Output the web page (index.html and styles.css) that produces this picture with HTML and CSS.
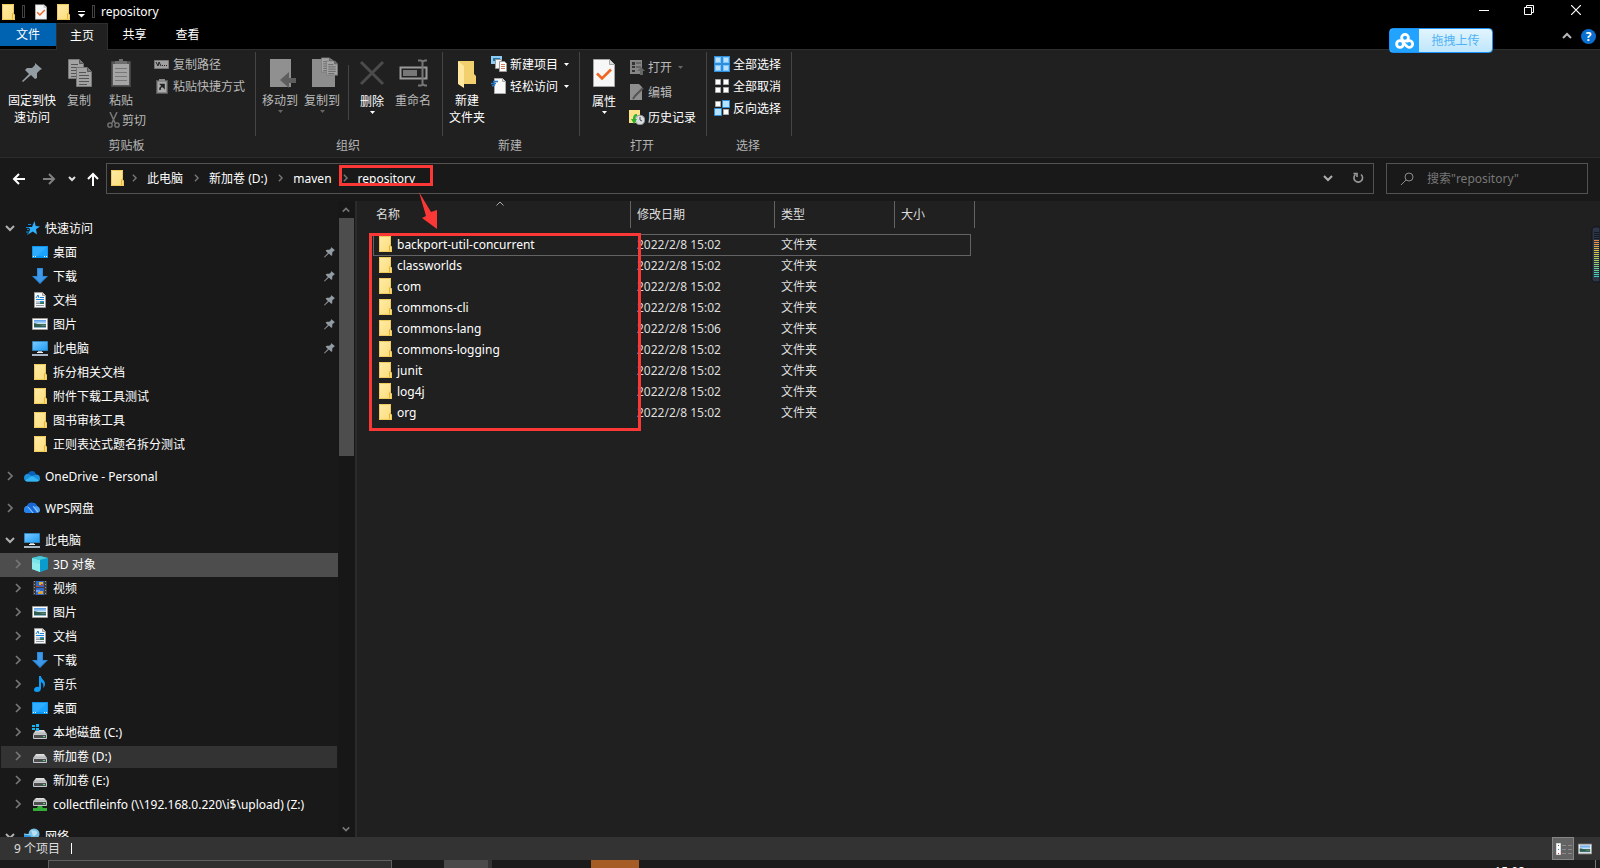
FILE: index.html
```html
<!DOCTYPE html>
<html lang="zh-CN">
<head>
<meta charset="utf-8">
<title>repository</title>
<link rel="stylesheet" href="styles.css">
</head>
<body>
<svg class="defs" aria-hidden="true">
  <defs>
    <linearGradient id="gFolder" x1="0" y1="0" x2="1" y2="1"><stop offset="0" stop-color="#ffeca8"/><stop offset="1" stop-color="#fbdc79"/></linearGradient>
    <linearGradient id="gBlue" x1="0" y1="0" x2="1" y2="1"><stop offset="0" stop-color="#7fcbff"/><stop offset="1" stop-color="#1c9cf6"/></linearGradient>
    <linearGradient id="gSky" x1="0" y1="0" x2="0" y2="1"><stop offset="0" stop-color="#4f9be8"/><stop offset="0.5" stop-color="#d8ecfa"/><stop offset="0.55" stop-color="#3f6b52"/><stop offset="1" stop-color="#9dc0e0"/></linearGradient>
    <linearGradient id="gDrive" x1="0" y1="0" x2="0" y2="1"><stop offset="0" stop-color="#e8e8e8"/><stop offset="1" stop-color="#b4b4b8"/></linearGradient>
    <linearGradient id="gVu" x1="0" y1="0" x2="0" y2="1"><stop offset="0" stop-color="#e8813f"/><stop offset="0.28" stop-color="#dcc13f"/><stop offset="0.55" stop-color="#a8cf58"/><stop offset="1" stop-color="#35cfc0"/></linearGradient>
  </defs>
  <symbol id="folder" viewBox="0 0 16 16"><path d="M2 0h12v10l1 1v5H2z" fill="url(#gFolder)"/><path d="M2.500 .5h11v9.500l1 1v4.500h-12z" fill="none" stroke="#f0cb5c"/><path d="M12.500 15V10l1-1.500" fill="none" stroke="#e3b53c"/></symbol>
  <symbol id="chev-r" viewBox="0 0 8 10"><path d="M2 1l4 4-4 4" fill="none" stroke="currentColor" stroke-width="1.700"/></symbol>
  <symbol id="chev-d" viewBox="0 0 10 8"><path d="M1 2l4 4 4-4" fill="none" stroke="currentColor" stroke-width="2"/></symbol>
  <symbol id="caret" viewBox="0 0 5 3"><path d="M0 0h5L2.500 3z" fill="currentColor"/></symbol>
  <symbol id="pin" viewBox="0 0 20 20"><path d="M13 0l7 6-2 1-3 3v5l-2 1-4-4-8 7-1-1 7-7-4-4 2-2 5 0 3-3z" fill="#929ca3"/></symbol>
  <symbol id="star" viewBox="0 0 16 16"><path d="M10.500 1l1.200 5 4.300.5-4 2.700 1 5.300-4.200-3L4 14.500l2.200-5.200L4 7h4z" fill="#2fb0ff"/><path d="M4 4.500h3M2 7.500h3M3 9.500h2M2 12h3M3 14h1" stroke="#1387d2"/></symbol>
  <symbol id="desktop" viewBox="0 0 16 16"><rect y="2" width="16" height="12" fill="#0d94ec"/><path d="M1 3h14v9H1z" fill="#1aa4ff"/><path d="M1 3h14L5 12H1z" fill="#31adff"/><path d="M1 12.500h1M3 12.500h1M12 12.500h1M14 12.500h1" stroke="#fff"/></symbol>
  <symbol id="download" viewBox="0 0 16 16"><path d="M5 0h6v8h5l-8 8-8-8h5z" fill="#2c8ade"/><path d="M6 1h4v8h3l-5 5-5-5h3z" fill="#4099e8"/></symbol>
  <symbol id="document" viewBox="0 0 16 16"><path d="M2.500 .5h8l3 3v12h-11z" fill="#f8f8f8" stroke="#9b9b9b"/><path d="M10.500 .5v3h3" fill="#ddd" stroke="#9b9b9b"/><path d="M4 6l2-3 1 3M8 5.500h4M4 7.500h8" fill="none" stroke="#1684d8"/><path d="M4 10h4M4 11.500h4M4 13.500h8" stroke="#8c9aaa"/><path d="M8 9h4v3H8z" fill="#348ccf"/><path d="M8 11l4-1v2H8z" fill="#367449"/></symbol>
  <symbol id="picture" viewBox="0 0 16 16"><path d="M.5 2.500h15v11H.5z" fill="#fff" stroke="#9d9a96"/><path d="M2 4h12v8H2z" fill="url(#gSky)"/><path d="M2 7l4 1 4 2h4v1H2z" fill="#315f4d"/></symbol>
  <symbol id="pc" viewBox="0 0 16 16"><path d="M.5 1.500h15v9H.5z" fill="url(#gBlue)" stroke="#3185ba"/><path d="M6 11h4v2H6z" fill="#a8b5c0"/><path d="M5 12.500h6" stroke="#eef2f5"/><path d="M0 15h16" stroke="#a9b7c5" stroke-width="2"/></symbol>
  <symbol id="onedrive" viewBox="0 0 16 16"><path d="M1 8a4 4 0 0 1 3-2.500C6 2 11 2 12 6.500L8 10z" fill="#0a63b8"/><path d="M0 10a4 4 0 0 1 4-4l4 2 4-1.500a4 4 0 0 1 4 4c0 2-1 3-3 3H3c-2 0-3-2-3-3.500z" fill="#1c91dd"/><path d="M1 12.500L8 8l7.500 4.500-2 1H3z" fill="#35b5f2"/></symbol>
  <symbol id="wps" viewBox="0 0 16 16"><path d="M0 10c0-2 1-4 3-4 1-3 4-4 6-3 2 0 3 1 4 3 2 1 3 2 3 4s-1 3-4 3H4c-3 0-4-1-4-3z" fill="#4ba1f8"/><path d="M3 6c1-3 4-4 6-3 2 0 3 1 4 3l-4 1 4 6h-3L6 8z" fill="#1767d8"/><path d="M0 10c0-3 3-4 5-2l5 5H4c-3 0-4-1-4-3z" fill="#2280ef"/><path d="M4 7l5 6M9 6l5 6" stroke="#b9dcff" stroke-width=".8"/></symbol>
  <symbol id="cube" viewBox="0 0 16 16"><path d="M8 0l8 2v11l-8 3-8-3V2z" fill="#22b8cf"/><path d="M0 2l8 2v12l-8-3z" fill="#79e4ea"/><path d="M0 2l8-2 8 2-8 2z" fill="#4cc7d4"/><path d="M8 4l8-2v11l-8 3z" fill="#0a9ccc"/><path d="M0 6l8 2v8l-8-3z" fill="#a6f3ee" opacity=".5"/></symbol>
  <symbol id="video" viewBox="0 0 16 16"><path d="M1 1h14v14H1z" fill="#3d3d3d"/><path d="M2.500 1v14M13.500 1v14" stroke="#999" stroke-dasharray="1 2"/><path d="M4 1h8v6H4zM4 8h8v7H4z" fill="#2f68c8"/><path d="M7 2h4v3H7z" fill="#ddb02c"/><path d="M4 6h3v1H4zM9 4h2v2H9z" fill="#c64633"/><path d="M6 11h5v3H6z" fill="#e2a22d"/><path d="M4 10h4v2H4z" fill="#6ca1ef"/></symbol>
  <symbol id="music" viewBox="0 0 16 16"><path d="M7 0h2c0 3 4 4 4 8 0 2-1 3-2 4 1-3 0-5-2-6v6c0 3-2 4-4 4s-3-1-3-2c0-2 2-4 5-3z" fill="#109cf5"/></symbol>
  <symbol id="drive" viewBox="0 0 16 16"><path d="M4 6h8l3 4H1z" fill="url(#gDrive)"/><path d="M1.500 10.500h13v4h-13z" fill="#4b4d50" stroke="#c5c8cb"/><path d="M11 12h2v1h-2z" fill="#54e05f"/></symbol>
  <symbol id="drive-c" viewBox="0 0 16 16"><use href="#drive"/><path d="M0 1h3v2H0zM4 0h3v3H4zM0 4h3v2H0zM4 4h3v3H4z" fill="#13b5f4"/></symbol>
  <symbol id="drive-z" viewBox="0 0 16 16"><path d="M4 2h8l3 3H1z" fill="url(#gDrive)"/><path d="M1.500 5.500h13v4h-13z" fill="#4b4d50" stroke="#c5c8cb"/><path d="M11 7h2v1h-2z" fill="#54e05f"/><path d="M1 12h4l1-2h4l1 2h4v3H1z" fill="#33ae38"/></symbol>
  <symbol id="network" viewBox="0 0 16 16"><circle cx="10" cy="6" r="5.500" fill="#76bfe4"/><path d="M7 2c3 1 5 0 6 2s-2 4-4 4" fill="#b9e0f2"/><path d="M0 6l7 1v6H0z" fill="#2c95dd"/><path d="M0 6l7 1" stroke="#9bd5f5"/></symbol>
  <symbol id="props" viewBox="0 0 22 28"><path d="M.5 .5h16l5 5v22H.5z" fill="#f7f7f7" stroke="#a5a5a5"/><path d="M16.500 .5v5h5" fill="#dcdcdc" stroke="#a5a5a5"/><path d="M4 14.500l5 5 9-9" fill="none" stroke="#ef6620" stroke-width="2.600"/></symbol>
  <symbol id="paper" viewBox="0 0 16 20"><path d="M.5 .5h11l4 4v15H.5z" fill="#a3a3a3" stroke="#777"/><path d="M11.500 .5v4h4" fill="#777" stroke="#555"/><path d="M3 5.500h7M3 8.500h10M3 11.500h10M3 14.500h10M3 17.500h8" stroke="#555"/></symbol>
</svg>

<div class="window">
  <header class="titlebar">
    <svg class="i16"><use href="#folder"/></svg>
    <span class="tsep tsep-a"></span>
    <svg class="t-props"><use href="#props"/></svg>
    <svg class="i16"><use href="#folder"/></svg>
    <svg class="t-menu" viewBox="0 0 9 8"><path d="M1 1.500h7" stroke="#fff"/><path d="M1 4h7L4.500 7.500z" fill="#fff"/></svg>
    <span class="tsep"></span>
    <h1 class="title">repository</h1>
    <div class="winbtns">
      <button aria-label="最小化"><svg class="w10" viewBox="0 0 10 10"><path d="M0 5.500h10" stroke="#fff"/></svg></button>
      <button aria-label="还原"><svg class="w10" viewBox="0 0 10 10"><path d="M.5 2.500h7v7h-7zM2.500 2V.5h7v7H8" fill="none" stroke="#fff"/></svg></button>
      <button aria-label="关闭"><svg class="w10" viewBox="0 0 10 10"><path d="M0 0l10 10M10 0L0 10" stroke="#fff" stroke-width="1.200"/></svg></button>
    </div>
  </header>

  <nav class="tabs">
    <button class="tab tab-file">文件</button>
    <button class="tab tab-on">主页</button>
    <button class="tab">共享</button>
    <button class="tab">查看</button>
    <div class="tab-end">
      <button class="collapse" aria-label="折叠功能区"><svg viewBox="0 0 10 8"><path d="M1 6l4-4 4 4" fill="none" stroke="#b8b8b8" stroke-width="2"/></svg></button>
      <button class="help" aria-label="帮助">?</button>
    </div>
    <button class="upload"><span class="upload-logo"><svg viewBox="0 0 20 16"><g fill="none" stroke="#fff" stroke-width="2.800"><circle cx="10" cy="4.800" r="3.400"/><circle cx="5" cy="11" r="3.400"/><path d="M11.500 9a3.400 3.400 0 1 1 0 4L8 9.500"/></g></svg></span><span class="upload-text">拖拽上传</span></button>
  </nav>

  <section class="ribbon">
    <div class="group g-clip">
      <div class="gbody">
        <button class="big wide"><svg class="bi"><use href="#pin" x="6" y="6" width="20" height="20"/></svg><span>固定到快<br>速访问</span></button>
        <button class="big dim"><svg class="bi"><use href="#paper" x="5" y="2" width="16" height="20"/><use href="#paper" x="13" y="10" width="16" height="20"/></svg><span>复制</span></button>
        <div class="pastecol">
          <button class="big dim"><svg class="bi"><path d="M6.500 4.500h19v25h-19z" fill="#565656" stroke="#444"/><path d="M8 7h16v21H8z" fill="#a5a5a5"/><path d="M10 7V4h4V2h4v2h4v3z" fill="#6d6d6d"/><path d="M10 11.500h12M10 15.500h12M10 19.500h12M10 23.500h12" stroke="#777"/></svg><span>粘贴</span></button>
          <button class="small dim"><svg class="i16" viewBox="0 0 16 16"><path d="M5 0l5 11M12 0L7 11" stroke="#777" stroke-width="1.500"/><g fill="none" stroke="#777" stroke-width="1.300"><circle cx="5" cy="13" r="2.200"/><circle cx="12" cy="13" r="2.200"/></g></svg>剪切</button>
        </div>
        <div class="stack">
          <button class="small dim"><svg class="i16" viewBox="0 0 16 16"><path d="M.5 4.500h14v8H.5z" fill="#a0a0a0" stroke="#777"/><path d="M2 6l2 4 1-4 2 4M8 9.500h1M10 9.500h1M12 9.500h1" fill="none" stroke="#222"/></svg>复制路径</button>
          <button class="small dim"><svg class="i16" viewBox="0 0 16 16"><path d="M2 2h12v14H2z" fill="#555"/><path d="M3.500 3.500h9v11h-9z" fill="#aaa" stroke="#888"/><path d="M5 3V1h6v2z" fill="#888"/><path d="M6 12c0-2 0-3 3-4M7 6.500h3v3z" fill="none" stroke="#222" stroke-width="1.600"/></svg>粘贴快捷方式</button>
        </div>
      </div>
      <div class="glabel">剪贴板</div>
    </div>
    <div class="group g-org">
      <div class="gbody">
        <button class="big dim"><svg class="bi"><path d="M6 2h21v28H6z" fill="#909090"/><path d="M25 15v6h7v5h-7v5l-9-8z" fill="#5e5e5e"/></svg><span>移动到</span><svg class="caret"><use href="#caret"/></svg></button>
        <button class="big dim"><svg class="bi"><path d="M6 2h20l3 6v22H6z" fill="#8d8d8d"/><use href="#paper" x="15" y="0" width="12" height="16"/><use href="#paper" x="20" y="3" width="12" height="16"/></svg><span>复制到</span><svg class="caret"><use href="#caret"/></svg></button>
        <span class="vsep"></span>
        <button class="big split"><svg class="bi"><path d="M5 5l22 22M27 5L5 27" stroke="#4b4b4b" stroke-width="3"/></svg><span>删除</span><svg class="caret"><use href="#caret"/></svg></button>
        <button class="big dim"><svg class="bi"><path d="M3.500 10.500h26v11h-26z" fill="#222" stroke="#9a9a9a" stroke-width="2"/><path d="M6 13h14v6H6z" fill="#777"/><path d="M21 3.500h3l2 1 2-1h2M21 28.500h3l2-1 2 1h2M25.500 4v24" fill="none" stroke="#777" stroke-width="2"/></svg><span>重命名</span></button>
      </div>
      <div class="glabel">组织</div>
    </div>
    <div class="group g-new">
      <div class="gbody">
        <button class="big"><svg class="bi"><path d="M7 4h16v13l2 2v8H12z" fill="#f3d06e"/><path d="M7 4l6 5v22l-6-4z" fill="#ffe79f"/></svg><span>新建<br>文件夹</span></button>
        <div class="stack">
          <button class="small"><svg class="i16" viewBox="0 0 16 16"><path d="M0 0h11v8H0z" fill="#8dcdf5"/><path d="M2 2h7v3H2z" fill="#2478ac"/><path d="M4.500 3.500h6v9h-6z" fill="#f4f4f4" stroke="#999"/><path d="M8.500 5.500h5l2 2v8h-7z" fill="#fff" stroke="#999"/><path d="M10 8.500h4M10 10.500h4M10 12.500h4" stroke="#d6785d"/></svg>新建项目<svg class="caret"><use href="#caret"/></svg></button>
          <button class="small"><svg class="i16" viewBox="0 0 16 16"><path d="M3.500 .5h8l3 3v12h-11z" fill="#f8f8f8" stroke="#aaa"/><path d="M11.500 .5v3h3" fill="#ddd" stroke="#aaa"/><path d="M2 3.500h5M0 5.500h5M1 8l3-1" stroke="#2478c8" stroke-width="1.500"/></svg>轻松访问<svg class="caret"><use href="#caret"/></svg></button>
        </div>
      </div>
      <div class="glabel">新建</div>
    </div>
    <div class="group g-open">
      <div class="gbody">
        <button class="big split"><svg class="bi"><use href="#props" x="5" y="2" width="22" height="28"/></svg><span>属性</span><svg class="caret"><use href="#caret"/></svg></button>
        <div class="stack loose">
          <button class="small dim"><svg class="i16" viewBox="0 0 16 16"><path d="M1 1h12v14H1z" fill="#858585"/><path d="M3 3h3v3H3zM3 7h3v2H3zM3 11h3v2H3z" fill="#333"/><path d="M7 4h5M7 8h5" stroke="#444"/><path d="M11 16v-4H8l4-4 4 4h-2v4z" fill="#666"/></svg>打开<svg class="caret"><use href="#caret"/></svg></button>
          <button class="small dim"><svg class="i16" viewBox="0 0 16 16"><path d="M1 0h9l3 3v13H1z" fill="#8e8e8e"/><path d="M14 4L6 12l-2 3" stroke="#555" stroke-width="2" fill="none"/></svg>编辑</button>
          <button class="small"><svg class="i16" viewBox="0 0 16 16"><path d="M0 1h11v13H0z" fill="#ffe38b"/><circle cx="11" cy="11" r="4.800" fill="#d9dde0" stroke="#8c8f92"/><path d="M11 8v3l2 1" fill="none" stroke="#444"/><path d="M8 5c-3 0-4 2-4 5H2l3 5 3-5H6c0-2 1-3 2-3z" fill="#27b52c"/></svg>历史记录</button>
        </div>
      </div>
      <div class="glabel">打开</div>
    </div>
    <div class="group g-sel">
      <div class="gbody">
        <div class="stack">
          <button class="small"><svg class="i16" viewBox="0 0 16 16"><path d="M0 0h16v16H0z" fill="#2e8edb"/><path d="M1 1h6v6H1zM9 1h6v6H9zM1 9h6v6H1zM9 9h6v6H9z" fill="#7cc4fb"/><path d="M2 2h4v4H2zM10 2h4v4h-4zM2 10h4v4H2zM10 10h4v4h-4z" fill="#b8e0ff"/></svg>全部选择</button>
          <button class="small"><svg class="i16" viewBox="0 0 16 16"><path d="M1.500 1.500h5v5h-5zM9.500 1.500h5v5h-5zM1.500 9.500h5v5h-5zM9.500 9.500h5v5h-5z" fill="#fff" stroke="#aaa"/></svg>全部取消</button>
          <button class="small"><svg class="i16" viewBox="0 0 16 16"><path d="M1.500 1.500h5v5h-5zM9.500 9.500h5v5h-5z" fill="#fff" stroke="#aaa"/><path d="M8.500 .5h7v7h-7zM.5 8.500h7v7h-7z" fill="#b8e0ff" stroke="#2e8edb"/></svg>反向选择</button>
        </div>
      </div>
      <div class="glabel">选择</div>
    </div>
  </section>

  <div class="navrow">
    <div class="arrows">
      <button aria-label="后退"><svg class="arr" viewBox="0 0 14 14"><path d="M13 7H2M7 2L2 7l5 5" fill="none" stroke="#fff" stroke-width="2"/></svg></button>
      <button aria-label="前进"><svg class="arr" viewBox="0 0 14 14"><path d="M1 7h11M7 2l5 5-5 5" fill="none" stroke="#808080" stroke-width="2"/></svg></button>
      <button class="hist" aria-label="最近位置"><svg viewBox="0 0 10 8"><path d="M2 2l3 3 3-3" fill="none" stroke="#e0e0e0" stroke-width="2"/></svg></button>
      <button aria-label="上移"><svg class="arr" viewBox="0 0 14 14"><path d="M7 14V2M2 7l5-5 5 5" fill="none" stroke="#fff" stroke-width="2"/></svg></button>
    </div>
    <div class="address">
      <svg class="i16"><use href="#folder"/></svg>
      <svg class="cr"><use href="#chev-r"/></svg><a href="#">此电脑</a>
      <svg class="cr"><use href="#chev-r"/></svg><a href="#">新加卷 (D:)</a>
      <svg class="cr"><use href="#chev-r"/></svg><a href="#">maven</a>
      <svg class="cr"><use href="#chev-r"/></svg><a href="#">repository</a>
      <div class="mark mark-path"></div>
      <button class="adrop" aria-label="历史地址"><svg class="cd"><use href="#chev-d"/></svg></button>
      <button class="refresh" aria-label="刷新"><svg viewBox="0 0 12 12"><path d="M9 2.500a4.300 4.300 0 1 1-5.500 0M1.500 1.500H5V5" fill="none" stroke="#999" stroke-width="1.600"/></svg></button>
    </div>
    <label class="search"><svg viewBox="0 0 14 14"><circle cx="9" cy="5" r="4" fill="none" stroke="#8c8c8c"/><path d="M6 8l-5 5" stroke="#8c8c8c"/></svg><input type="text" placeholder="搜索&quot;repository&quot;" aria-label="搜索"></label>
  </div>

  <main class="main">
    <aside class="side">
      <ul class="tree">
        <li class="open"><svg class="cd"><use href="#chev-d"/></svg><svg class="i16"><use href="#star"/></svg>快速访问</li>
        <li class="sub"><svg class="i16"><use href="#desktop"/></svg>桌面<svg class="pin"><use href="#pin"/></svg></li>
        <li class="sub"><svg class="i16"><use href="#download"/></svg>下载<svg class="pin"><use href="#pin"/></svg></li>
        <li class="sub"><svg class="i16"><use href="#document"/></svg>文档<svg class="pin"><use href="#pin"/></svg></li>
        <li class="sub"><svg class="i16"><use href="#picture"/></svg>图片<svg class="pin"><use href="#pin"/></svg></li>
        <li class="sub"><svg class="i16"><use href="#pc"/></svg>此电脑<svg class="pin"><use href="#pin"/></svg></li>
        <li class="sub"><svg class="i16"><use href="#folder"/></svg>拆分相关文档</li>
        <li class="sub"><svg class="i16"><use href="#folder"/></svg>附件下载工具测试</li>
        <li class="sub"><svg class="i16"><use href="#folder"/></svg>图书审核工具</li>
        <li class="sub"><svg class="i16"><use href="#folder"/></svg>正则表达式题名拆分测试</li>
      </ul>
      <ul class="tree"><li><svg class="cr"><use href="#chev-r"/></svg><svg class="i16"><use href="#onedrive"/></svg>OneDrive - Personal</li></ul>
      <ul class="tree"><li><svg class="cr"><use href="#chev-r"/></svg><svg class="i16"><use href="#wps"/></svg>WPS网盘</li></ul>
      <ul class="tree">
        <li class="open"><svg class="cd"><use href="#chev-d"/></svg><svg class="i16"><use href="#pc"/></svg>此电脑</li>
        <li class="kid hot"><svg class="cr"><use href="#chev-r"/></svg><svg class="i16"><use href="#cube"/></svg>3D 对象</li>
        <li class="kid"><svg class="cr"><use href="#chev-r"/></svg><svg class="i16"><use href="#video"/></svg>视频</li>
        <li class="kid"><svg class="cr"><use href="#chev-r"/></svg><svg class="i16"><use href="#picture"/></svg>图片</li>
        <li class="kid"><svg class="cr"><use href="#chev-r"/></svg><svg class="i16"><use href="#document"/></svg>文档</li>
        <li class="kid"><svg class="cr"><use href="#chev-r"/></svg><svg class="i16"><use href="#download"/></svg>下载</li>
        <li class="kid"><svg class="cr"><use href="#chev-r"/></svg><svg class="i16"><use href="#music"/></svg>音乐</li>
        <li class="kid"><svg class="cr"><use href="#chev-r"/></svg><svg class="i16"><use href="#desktop"/></svg>桌面</li>
        <li class="kid"><svg class="cr"><use href="#chev-r"/></svg><svg class="i16"><use href="#drive-c"/></svg>本地磁盘 (C:)</li>
        <li class="kid current"><svg class="cr"><use href="#chev-r"/></svg><svg class="i16"><use href="#drive"/></svg>新加卷 (D:)</li>
        <li class="kid"><svg class="cr"><use href="#chev-r"/></svg><svg class="i16"><use href="#drive"/></svg>新加卷 (E:)</li>
        <li class="kid"><svg class="cr"><use href="#chev-r"/></svg><svg class="i16"><use href="#drive-z"/></svg>collectfileinfo (\\192.168.0.220\i$\upload) (Z:)</li>
      </ul>
      <ul class="tree"><li class="open"><svg class="cd"><use href="#chev-d"/></svg><svg class="i16"><use href="#network"/></svg>网络</li></ul>
    </aside>
    <div class="scroll">
      <svg class="sb" viewBox="0 0 10 8"><path d="M1 6l4-4 4 4" fill="none" stroke="#777" stroke-width="2"/></svg>
      <div class="thumb"></div>
      <svg class="sb" viewBox="0 0 10 8"><path d="M1 2l4 4 4-4" fill="none" stroke="#777" stroke-width="2"/></svg>
    </div>
    <section class="files">
      <table>
        <colgroup><col class="c-name"><col class="c-date"><col class="c-type"><col class="c-size"></colgroup>
        <thead><tr><th>名称<svg class="sort" viewBox="0 0 8 5"><path d="M.5 4.500L4 1l3.500 3.500" fill="none" stroke="#aaa"/></svg></th><th>修改日期</th><th>类型</th><th>大小</th></tr></thead>
        <tbody>
          <tr class="focus"><td><svg class="i16"><use href="#folder"/></svg>backport-util-concurrent</td><td>2022/2/8 15:02</td><td>文件夹</td><td></td></tr>
          <tr><td><svg class="i16"><use href="#folder"/></svg>classworlds</td><td>2022/2/8 15:02</td><td>文件夹</td><td></td></tr>
          <tr><td><svg class="i16"><use href="#folder"/></svg>com</td><td>2022/2/8 15:02</td><td>文件夹</td><td></td></tr>
          <tr><td><svg class="i16"><use href="#folder"/></svg>commons-cli</td><td>2022/2/8 15:02</td><td>文件夹</td><td></td></tr>
          <tr><td><svg class="i16"><use href="#folder"/></svg>commons-lang</td><td>2022/2/8 15:06</td><td>文件夹</td><td></td></tr>
          <tr><td><svg class="i16"><use href="#folder"/></svg>commons-logging</td><td>2022/2/8 15:02</td><td>文件夹</td><td></td></tr>
          <tr><td><svg class="i16"><use href="#folder"/></svg>junit</td><td>2022/2/8 15:02</td><td>文件夹</td><td></td></tr>
          <tr><td><svg class="i16"><use href="#folder"/></svg>log4j</td><td>2022/2/8 15:02</td><td>文件夹</td><td></td></tr>
          <tr><td><svg class="i16"><use href="#folder"/></svg>org</td><td>2022/2/8 15:02</td><td>文件夹</td><td></td></tr>
        </tbody>
      </table>
      <div class="mark mark-list"></div>
      <svg class="mark-arrow" viewBox="0 0 18 38"><path d="M0 0l12 20 6-2v19L3 26l4-2z" fill="#fb3836"/></svg>
      <svg class="vu" viewBox="0 0 9 57"><path d="M3 1h6v55H3l-2-2V3z" fill="#2d3647" stroke="#11151d"/><path d="M5.500 6v8" stroke="#141a24" stroke-width="5" stroke-dasharray="1 1"/><path d="M3 14h5v37H3z" fill="url(#gVu)"/><path d="M5.500 15v37" stroke="#2d3647" stroke-width="5" stroke-dasharray="1 1"/></svg>
    </section>
  </main>

  <footer class="status">
    <span>9 个项目</span><span class="bar"></span>
    <button class="view view-on" aria-label="详细信息"><svg viewBox="0 0 18 16"><path d="M2.500 2.500h4v11h-4z" fill="#fff" stroke="#ddd"/><path d="M4 4.500h1" stroke="#277a57"/><path d="M4 8.500h1" stroke="#2780e0"/><path d="M4 12.500h1" stroke="#d22"/><path d="M8 4.500h4M14 4.500h4M8 8.500h4M14 8.500h4M8 12.500h4M14 12.500h4" stroke="#8a8a8a"/></svg></button>
    <button class="view" aria-label="大图标"><svg class="i14"><use href="#picture"/></svg></button>
  </footer>
</div>

<div class="taskbar">
  <div class="tsearch"></div>
  <div class="tapp"></div>
  <div class="torange"></div>
  <div class="clock">15:08</div>
  <div class="peek"></div>
</div>
</body>
</html>
```
FILE: styles.css
```css
* { box-sizing: border-box; }
html, body { height: 100%; margin: 0; }
body {
  display: flex;
  flex-direction: column;
  overflow: hidden;
  background: #191919;
  color: #fff;
  font: 12px/17px "Noto Sans", "Noto Sans CJK SC", sans-serif;
}
button {
  margin: 0;
  padding: 0;
  border: 0;
  background: none;
  color: inherit;
  font: inherit;
}
svg { display: block; flex: none; }
a { color: inherit; text-decoration: none; }
.defs { position: absolute; width: 0; height: 0; }
.i16 { width: 16px; height: 16px; }
.i14 { width: 14px; height: 14px; }
.cr { width: 8px; height: 10px; color: #777; }
.cd { width: 10px; height: 8px; color: #b0b0b0; }
.caret { width: 5px; height: 3px; }
.mark { position: absolute; border: 3px solid #fb3836; pointer-events: none; }

.window { flex: 1; min-height: 0; display: flex; flex-direction: column; }

/* title bar */
.titlebar { flex: none; height: 23px; display: flex; align-items: center; background: #000; }
.tsep { width: 3px; height: 13px; border: 1px solid #444; }
.tsep-a { margin: 0 10px 0 6px; }
.t-props { width: 12px; height: 16px; margin-right: 8px; }
.t-menu { width: 9px; height: 8px; margin: 4px 6px 0 6px; }
.title { margin: 0 0 0 6px; font-size: 12px; font-weight: 400; }
.winbtns { margin-left: auto; display: flex; align-self: stretch; }
.winbtns button { width: 45px; display: flex; justify-content: center; padding-top: 5px; }
.winbtns button:last-child { width: 49px; }
.w10 { width: 10px; height: 10px; }

/* ribbon tabs */
.tabs { position: relative; flex: none; height: 27px; display: flex; background: #000; border-bottom: 1px solid #2e2e2e; }
.tab { width: 53px; height: 23px; }
.tab-file { width: 56px; background: #0063b1; }
.tab-on { width: 52px; height: 27px; padding-bottom: 4px; background: #202020; border: 1px solid #2e2e2e; border-bottom: 0; }
.tab-end { margin-left: auto; display: flex; align-items: center; gap: 9px; padding-right: 4px; }
.collapse svg { width: 10px; height: 8px; }
.help { width: 15px; height: 15px; border-radius: 50%; background: #0a6fd0; font-weight: 700; line-height: 15px; }
.upload {
  position: absolute;
  top: 5px;
  right: 107px;
  z-index: 2;
  width: 104px;
  height: 25px;
  display: flex;
  overflow: hidden;
  border: 1px solid #1b90f5;
  border-radius: 4px;
  background: linear-gradient(#e2f5fe, #bfe6fb);
  color: #4eb2f6;
}
.upload-logo { width: 29px; align-self: stretch; display: grid; place-items: center; background: #22a3ff; }
.upload-logo svg { width: 20px; height: 16px; }
.upload-text { flex: 1; align-self: center; }

/* ribbon */
.ribbon { flex: none; display: flex; background: #202020; border-bottom: 1px solid #2c2c2c; }
.group { display: flex; flex-direction: column; background: linear-gradient(#444, #444) right 0 top 2px / 1px 84px no-repeat; }
.g-clip { width: 256px; }
.g-org { width: 187px; }
.g-new { width: 137px; }
.g-open { width: 127px; }
.g-sel { width: 85px; }
.gbody { display: flex; height: 87px; padding-left: 3px; }
.g-clip .gbody { padding-left: 6px; }
.g-sel .gbody { padding-left: 0; }
.glabel { height: 20px; padding-right: 3px; text-align: center; color: #b4b4b4; }
.big { width: 42px; padding-top: 7px; display: flex; flex-direction: column; align-items: center; white-space: nowrap; align-self: flex-start; }
.big.wide { width: 52px; }
.big .caret { margin-top: 1px; }
.bi { width: 32px; height: 32px; margin-bottom: 3px; }
.split .bi { margin-bottom: 4px; }
.dim { color: #bababa; }
.dim .caret { color: #666; }
.pastecol { width: 48px; }
.small { height: 22px; display: flex; align-items: center; gap: 3px; white-space: nowrap; }
.small .caret { margin-left: 3px; }
.pastecol .small { padding-left: 5px; gap: 1px; }
.stack { padding: 3px 0 0 6px; }
.g-new .stack { padding-left: 3px; }
.g-open .stack { padding-left: 4px; }
.g-sel .stack { padding-left: 7px; }
.loose { display: flex; flex-direction: column; gap: 3px; padding-top: 6px; }
.vsep { width: 1px; height: 55px; margin: 15px 3px 0 5px; background: #444; }
.g-org .gbody .vsep + .big { width: 40px; }

/* address row */
.navrow { flex: none; height: 43px; display: flex; align-items: flex-start; padding: 5px 12px 0 0; }
.arrows { width: 106px; height: 31px; display: flex; align-items: center; padding-left: 12px; }
.arr { width: 14px; height: 14px; }
.arrows button + button { margin-left: 16px; }
.arrows .hist svg { width: 10px; height: 8px; }
.arrows button.hist { margin-left: 11px; }
.arrows .hist + button { margin-left: 9px; }
.address { position: relative; flex: 1; height: 31px; display: flex; align-items: center; border: 1px solid #535353; padding: 0 0 1px 2px; }
.address .cr { width: 7px; height: 8px; margin: 0 9px 0 10px; }
.address .i16 + .cr { margin-left: 6px; }
.mark-path { left: 232px; top: 1px; width: 94px; height: 21px; }
.adrop { margin-left: auto; width: 30px; display: grid; place-items: center; }
.refresh { width: 30px; display: grid; place-items: center; }
.refresh svg { width: 12px; height: 12px; }
.search { width: 202px; height: 31px; margin-left: 12px; display: flex; align-items: center; border: 1px solid #535353; padding-left: 13px; }
.search svg { width: 14px; height: 14px; }
.search input { flex: 1; min-width: 0; margin-left: 13px; padding: 0; border: 0; outline: 0; background: none; color: #fff; font: inherit; }
.search input::placeholder { color: #777; opacity: 1; }

/* navigation tree */
.main { flex: 1; min-height: 0; display: flex; }
.side { width: 338px; flex: none; padding-top: 16px; overflow: hidden; }
.tree { margin: 0 0 8px; padding: 0; list-style: none; }
.tree li { height: 24px; display: flex; align-items: center; padding: 0 0 2px 6px; white-space: nowrap; }
.tree .i16 { margin: 0 5px 0 10px; }
.tree .open { padding-left: 5px; }
.tree .open .i16 { margin-left: 9px; }
.tree .sub { padding-left: 22px; }
.tree .kid { padding-left: 14px; }
.tree .hot { background: #4d4d4d; }
.tree .current { background: #333; border: 1px solid #191919; padding-left: 13px; }
.tree .pin { width: 11px; height: 11px; margin: 0 3px 0 auto; }
.scroll { width: 19px; flex: none; display: flex; flex-direction: column; background: #171717; border-right: 2px solid #2b2b2b; }
.sb { width: 8px; height: 8px; margin: 5px 5px 4px 4px; }
.thumb { width: 15px; height: 238px; margin: 0 1px auto; background: #4d4d4d; }

/* file list */
.files { position: relative; flex: 1; background: #202020; padding-left: 16px; }
table { width: 602px; table-layout: fixed; border-collapse: separate; border-spacing: 0; }
.c-name { width: 258px; }
.c-date { width: 144px; }
.c-type { width: 120px; }
.c-size { width: 80px; }
th { position: relative; height: 33px; padding: 0 0 6px 6px; background: linear-gradient(#636363, #636363) right top / 1px 27px no-repeat; color: #dedede; font-weight: 400; text-align: left; }
th:first-child { padding-left: 3px; }
td { height: 21px; padding: 0 0 0 6px; color: #dedede; white-space: nowrap; }
td:first-child { display: flex; align-items: center; gap: 4px; padding-left: 4px; color: #fff; }
td .i16 { margin-bottom: 1px; }
.sort { position: absolute; left: 123px; top: 0; width: 8px; height: 5px; }
.focus { position: relative; }
.focus::after { content: ""; position: absolute; inset: 0 4px -1px 0; border: 1px solid #636363; }
.mark-list { left: 12px; top: 32px; width: 272px; height: 198px; }
.mark-arrow { position: absolute; left: 62px; top: -9px; width: 18px; height: 38px; }
.vu { position: absolute; right: 0; top: 25px; width: 9px; height: 57px; }

/* status bar */
.status { flex: none; height: 23px; display: flex; align-items: center; padding: 0 4px 0 14px; background: #333; color: #dedede; }
.bar { width: 1px; height: 11px; margin-left: 11px; background: #fff; }
.view { width: 22px; height: 23px; display: grid; place-items: center; }
.view-on { margin-left: auto; background: #636363; border: 1px solid #858585; }
.view-on svg { width: 18px; height: 16px; }

/* taskbar */
.taskbar { flex: none; height: 8px; display: flex; overflow: hidden; background: #1b1b1b; }
.tsearch { width: 344px; margin-left: 48px; background: #2f2f2f; border: 1px solid #606060; border-bottom: 0; }
.tapp { width: 48px; margin-left: 52px; background: #4a4a4a; border-right: 4px solid #333; }
.torange { width: 48px; margin-left: 99px; background: #a65d25; }
.clock { margin: 3px 70px 0 auto; }
.peek { width: 1px; margin-right: 4px; background: #777; }
```
